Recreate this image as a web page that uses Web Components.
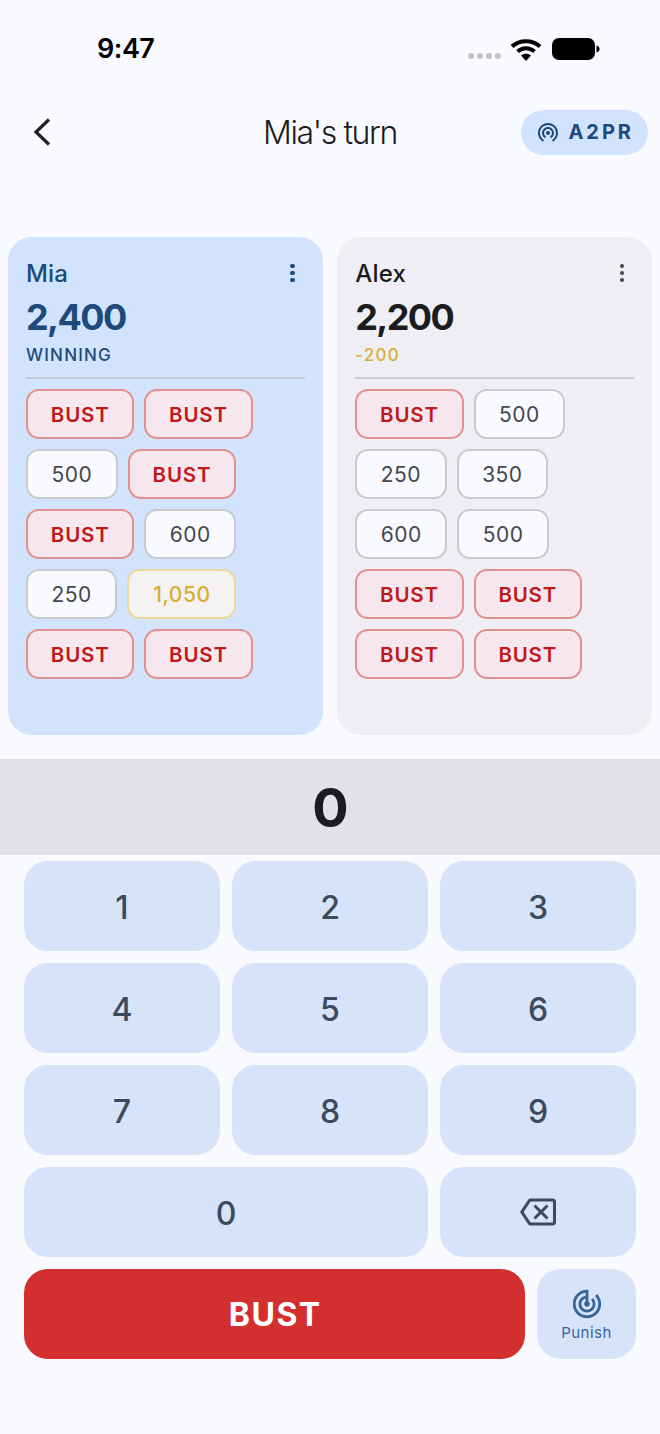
<!DOCTYPE html>
<html>
<head>
<meta charset="utf-8">
<style>
  html, body { margin: 0; padding: 0; background: #f9faff; }
  body { width: 660px; height: 1434px; overflow: hidden; font-family: Inter, "Noto Sans", sans-serif; }
</style>
</head>
<body>
<game-screen></game-screen>

<script>
class StatusBar extends HTMLElement {
  constructor() {
    super();
    this.shadowDOM = this.attachShadow({mode: "open"});
    this.shadowDOM.innerHTML = `
      <style>
        :host { display: flex; height: 88px; align-items: flex-start; justify-content: space-between; box-sizing: border-box; padding: 33px 60px 0 97px; }
        .time { font-size: 27px; line-height: 31px; font-weight: 600; color: #000; letter-spacing: -0.5px; }
        .icons { display: flex; align-items: flex-start; gap: 10px; margin-top: 5px; }
        .dots { display: flex; gap: 3px; margin: 15px -1px 0 0; }
        .dots i { width: 6px; height: 6px; border-radius: 50%; background: #c2c3c6; }
        svg { display: block; }
      </style>
      <div class="time">9:47</div>
      <div class="icons">
        <div class="dots"><i></i><i></i><i></i><i></i></div>
        <svg width="32" height="24" viewBox="0 0 32 24">
          <path d="M2 8.500C9.500 1.500 22.500 1.500 30 8.500" fill="none" stroke="#000" stroke-width="4"/>
          <path d="M7.500 13.500C12.500 9 19.500 9 24.500 13.500" fill="none" stroke="#000" stroke-width="4"/>
          <path d="M11 17.500 C14 15 18 15 21 17.500 L16 23 Z" fill="#000"/>
        </svg>
        <svg width="48" height="22" viewBox="0 0 48 22">
          <rect x="0" y="0" width="43" height="22" rx="7" fill="#000"/>
          <path d="M44.500 7.500c2 .4 3 1.800 3 3.500s-1 3.100-3 3.500z" fill="#000"/>
        </svg>
      </div>`;
  }
}

class AppBar extends HTMLElement {
  constructor() {
    super();
    this.shadowDOM = this.attachShadow({mode: "open"});
    this.shadowDOM.innerHTML = `
      <style>
        :host { display: grid; grid-template-columns: minmax(0, 1fr) auto minmax(0, 1fr); align-items: center; height: 88px; padding: 0 12px; box-sizing: border-box; }
        svg { display: block; }
        .back { margin-left: 18px; }
        .title { font-size: 32px; line-height: 40px; font-weight: 350; color: #1a1c20; letter-spacing: -1.400px; margin-top: 2px; }
        .room { justify-self: end; display: flex; align-items: center; gap: 8px; height: 45px; padding: 0 17px 0 15px; border-radius: 23px; background: #d2e3fd; color: #1c4a7b; font-size: 20px; font-weight: 700; letter-spacing: 3px; white-space: nowrap; }
        .room span { margin-right: -3px; }
      </style>
      <svg class="back" width="24" height="32" viewBox="0 0 24 32"><path d="M19 3.500 6 16l13 12.500" fill="none" stroke="#1f2124" stroke-width="3.200"/></svg>
      <div class="title">Mia's turn</div>
      <div class="room">
        <svg width="24" height="24" viewBox="0 0 24 24" fill="#1c4a7b"><path d="M12 7c-3.310 0-6 2.690-6 6 0 2.220 1.210 4.150 3 5.190l1-1.740c-1.190-.7-2-1.970-2-3.450 0-2.210 1.790-4 4-4s4 1.790 4 4c0 1.480-.81 2.750-2 3.450l1 1.740c1.790-1.040 3-2.970 3-5.190 0-3.310-2.690-6-6-6zm0 4c-1.100 0-2 .9-2 2s.9 2 2 2 2-.9 2-2-.9-2-2-2zM12 3C6.480 3 2 7.480 2 13c0 3.700 2.010 6.920 4.990 8.650l1-1.730C5.610 18.530 4 15.960 4 13c0-4.420 3.580-8 8-8s8 3.580 8 8c0 2.960-1.610 5.530-4 6.920l1 1.730c2.990-1.730 5-4.950 5-8.650 0-5.520-4.480-10-10-10z"/></svg>
        <span>A2PR</span>
      </div>`;
  }
}

class ScoreChip extends HTMLElement {
  constructor() {
    super();
    this.shadowDOM = this.attachShadow({mode: "open"});
    this.shadowDOM.innerHTML = `
      <style>
        :host { display: inline-flex; align-items: center; justify-content: center; box-sizing: border-box; height: 50px; padding: 0 23.500px; border-radius: 13px; border: 2px solid #c8cad0; background: #f9faff; color: #44474c; font-size: 21px; letter-spacing: 0.5px; font-weight: 400; }
        :host([kind="bust"]) { width: 108.300px; padding: 0; border-color: #e49090; background: #f5e7ed; color: #bf1a1a; font-weight: 600; font-size: 20.500px; letter-spacing: 0.8px; }
        :host([kind="top"]) { border-color: #edd898; background: #f4f3f1; color: #d7ae33; font-weight: 500; padding: 0 24px; }
      </style>
      <slot></slot>`;
  }
}

class PlayerCard extends HTMLElement {
  constructor() {
    super();
    this.shadowDOM = this.attachShadow({mode: "open"});
    this.shadowDOM.innerHTML = `
      <style>
        :host { display: block; box-sizing: border-box; height: 498px; padding: 22px 18px 0; border-radius: 24px; background: #eeeef4; color: #1a1c20; --sub: #d7ae33; --dots: #44474c; }
        :host([active]) { background: #d2e3fd; color: #1c4a7b; --sub: #1c4a7b; --dots: #1c4a7b; }
        .head { display: flex; justify-content: space-between; align-items: center; height: 28px; }
        .name { font-size: 24px; font-weight: 500; letter-spacing: 0.2px; }
        .more { display: flex; flex-direction: column; gap: 2.500px; margin-right: 10px; }
        .more i { width: 4.500px; height: 4.500px; border-radius: 50%; background: var(--dots); }
        .score { font-size: 36px; line-height: 42px; font-weight: 700; margin-top: 9px; letter-spacing: -1.600px; }
        .sub { font-size: 17px; line-height: 24px; font-weight: 500; letter-spacing: 1.200px; color: var(--sub); margin-top: 5px; height: 26px; }
        hr { border: 0; height: 2px; background: #c8ccd2; margin: 8px 0 10px; }
        .chips { display: flex; flex-wrap: wrap; gap: 10px; }
      </style>
      <div class="head">
        <div class="name"></div>
        <div class="more"><i></i><i></i><i></i></div>
      </div>
      <div class="score"></div>
      <div class="sub"></div>
      <hr>
      <div class="chips"><slot></slot></div>`;
  }
  connectedCallback() {
    this.shadowDOM.querySelector(".name").textContent = this.getAttribute("name");
    this.shadowDOM.querySelector(".score").textContent = this.getAttribute("score");
    this.shadowDOM.querySelector(".sub").textContent = this.getAttribute("sub");
  }
}

class PadKey extends HTMLElement {
  constructor() {
    super();
    this.shadowDOM = this.attachShadow({mode: "open"});
    this.shadowDOM.innerHTML = `
      <style>
        :host { display: flex; align-items: center; justify-content: center; box-sizing: border-box; height: 90px; padding-top: 2px; border-radius: 24px; background: #d7e3f9; color: #3b4a5c; font-size: 32px; font-weight: 500; }
      </style>
      <slot></slot>`;
  }
}

class NumberPad extends HTMLElement {
  constructor() {
    super();
    this.shadowDOM = this.attachShadow({mode: "open"});
    this.shadowDOM.innerHTML = `
      <style>
        :host { display: block; padding: 6px 24px 0; }
        .keys { display: grid; grid-template-columns: repeat(3, 196px); gap: 12px; }
        .wide { grid-column: span 2; }
        .icon { padding-top: 0; }
        .actions { display: flex; gap: 12px; margin-top: 12px; }
        .bust { flex: 1; display: flex; align-items: center; justify-content: center; box-sizing: border-box; height: 90px; padding: 1px 0 0 1.500px; border-radius: 24px; background: #d32f2f; color: #fff; font-size: 32px; font-weight: 700; letter-spacing: 1.500px; }
        .punish { width: 99px; height: 90px; box-sizing: border-box; border-radius: 24px; background: #d7e3f9; color: #38659a; display: flex; flex-direction: column; align-items: center; justify-content: center; gap: 2px; font-size: 15px; font-weight: 400; letter-spacing: 0.5px; padding-top: 1px; }
        svg { display: block; }
      </style>
      <div class="keys">
        <pad-key>1</pad-key><pad-key>2</pad-key><pad-key>3</pad-key>
        <pad-key>4</pad-key><pad-key>5</pad-key><pad-key>6</pad-key>
        <pad-key>7</pad-key><pad-key>8</pad-key><pad-key>9</pad-key>
        <pad-key class="wide">0</pad-key>
        <pad-key class="icon">
          <svg width="36" height="36" viewBox="0 0 24 24" fill="#3b4a5c"><path d="M22 3H7c-.69 0-1.230.35-1.590.88L0 12l5.410 8.110c.36.53.9.89 1.590.89h15c1.100 0 2-.9 2-2V5c0-1.100-.9-2-2-2zm0 16H7.070L2.400 12l4.660-7H22v14zM10.410 17 14 13.410 17.590 17 19 15.590 15.410 12 19 8.410 17.590 7 14 10.590 10.410 7 9 8.410 12.590 12 9 15.590z"/></svg>
        </pad-key>
      </div>
      <div class="actions">
        <div class="bust">BUST</div>
        <div class="punish">
          <svg width="34" height="34" viewBox="0 0 24 24" fill="#38659a"><path d="M19.070 4.930l-1.410 1.410C19.100 7.790 20 9.790 20 12c0 4.420-3.580 8-8 8s-8-3.580-8-8c0-4.080 3.050-7.440 7-7.930v2.020C8.160 6.570 6 9.030 6 12c0 3.310 2.690 6 6 6s6-2.690 6-6c0-1.660-.67-3.160-1.760-4.240l-1.410 1.410C15.550 9.900 16 10.900 16 12c0 2.210-1.790 4-4 4s-4-1.790-4-4c0-1.860 1.280-3.410 3-3.860v2.140c-.6.35-1 .98-1 1.720 0 1.100.9 2 2 2s2-.9 2-2c0-.74-.4-1.380-1-1.720V2h-1C6.480 2 2 6.480 2 12s4.480 10 10 10 10-4.480 10-10c0-2.760-1.120-5.260-2.930-7.070z"/></svg>
          <span>Punish</span>
        </div>
      </div>`;
  }
}

class GameScreen extends HTMLElement {
  constructor() {
    super();
    this.shadowDOM = this.attachShadow({mode: "open"});
    this.shadowDOM.innerHTML = `
      <style>
        :host { display: block; }
        .players { display: grid; grid-template-columns: 1fr 1fr; gap: 14.600px; padding: 61px 8px 0; }
        .entry { display: flex; align-items: center; justify-content: center; height: 96px; margin-top: 24px; background: #e0e2e7; color: #1a1c20; font-size: 54px; font-weight: 700; letter-spacing: -1px; }
      </style>
      <status-bar></status-bar>
      <app-bar></app-bar>
      <div class="players">
        <player-card name="Mia" score="2,400" sub="WINNING" active>
          <score-chip kind="bust">BUST</score-chip><score-chip kind="bust">BUST</score-chip>
          <score-chip>500</score-chip><score-chip kind="bust">BUST</score-chip>
          <score-chip kind="bust">BUST</score-chip><score-chip>600</score-chip>
          <score-chip>250</score-chip><score-chip kind="top">1,050</score-chip>
          <score-chip kind="bust">BUST</score-chip><score-chip kind="bust">BUST</score-chip>
        </player-card>
        <player-card name="Alex" score="2,200" sub="-200">
          <score-chip kind="bust">BUST</score-chip><score-chip>500</score-chip>
          <score-chip>250</score-chip><score-chip>350</score-chip>
          <score-chip>600</score-chip><score-chip>500</score-chip>
          <score-chip kind="bust">BUST</score-chip><score-chip kind="bust">BUST</score-chip>
          <score-chip kind="bust">BUST</score-chip><score-chip kind="bust">BUST</score-chip>
        </player-card>
      </div>
      <div class="entry">0</div>
      <number-pad></number-pad>`;
  }
}

customElements.define("status-bar", StatusBar);
customElements.define("app-bar", AppBar);
customElements.define("score-chip", ScoreChip);
customElements.define("player-card", PlayerCard);
customElements.define("pad-key", PadKey);
customElements.define("number-pad", NumberPad);
customElements.define("game-screen", GameScreen);
</script>
</body>
</html>
